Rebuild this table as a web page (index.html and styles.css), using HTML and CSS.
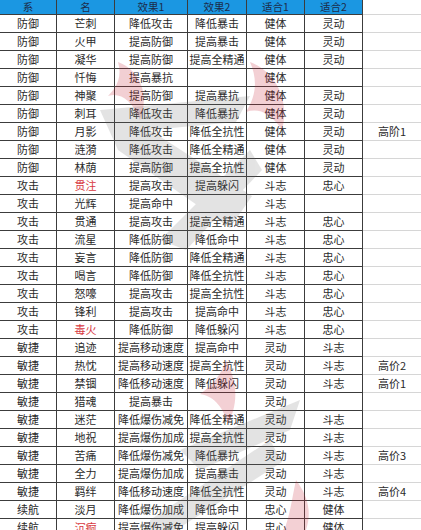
FILE: index.html
```html
<!DOCTYPE html>
<html lang="zh-CN">
<head>
<meta charset="utf-8">
<title>表</title>
<link rel="stylesheet" href="styles.css">
</head>
<body>
<div class="sheet">
  <div class="row head">
    <div class="c">系</div><div class="c">名</div><div class="c">效果1</div><div class="c">效果2</div><div class="c">适合1</div><div class="c">适合2</div><div class="c x"></div>
  </div>
  <div class="row"><div class="c">防御</div><div class="c">芒刺</div><div class="c">降低攻击</div><div class="c">降低暴击</div><div class="c">健体</div><div class="c">灵动</div><div class="c x"></div></div>
  <div class="row"><div class="c">防御</div><div class="c">火甲</div><div class="c">提高防御</div><div class="c">提高暴击</div><div class="c">健体</div><div class="c">灵动</div><div class="c x"></div></div>
  <div class="row"><div class="c">防御</div><div class="c">凝华</div><div class="c">提高防御</div><div class="c">提高全精通</div><div class="c">健体</div><div class="c">灵动</div><div class="c x"></div></div>
  <div class="row"><div class="c">防御</div><div class="c">忏悔</div><div class="c">提高暴抗</div><div class="c"></div><div class="c">健体</div><div class="c"></div><div class="c x"></div></div>
  <div class="row"><div class="c">防御</div><div class="c">神聚</div><div class="c">提高防御</div><div class="c">提高暴抗</div><div class="c">健体</div><div class="c">灵动</div><div class="c x"></div></div>
  <div class="row"><div class="c">防御</div><div class="c">刺耳</div><div class="c">降低攻击</div><div class="c">降低暴抗</div><div class="c">健体</div><div class="c">灵动</div><div class="c x"></div></div>
  <div class="row"><div class="c">防御</div><div class="c">月影</div><div class="c">降低攻击</div><div class="c">降低全抗性</div><div class="c">健体</div><div class="c">灵动</div><div class="c x">高阶1</div></div>
  <div class="row"><div class="c">防御</div><div class="c">涟漪</div><div class="c">降低攻击</div><div class="c">降低全精通</div><div class="c">健体</div><div class="c">灵动</div><div class="c x"></div></div>
  <div class="row"><div class="c">防御</div><div class="c">林荫</div><div class="c">提高防御</div><div class="c">提高全抗性</div><div class="c">健体</div><div class="c">灵动</div><div class="c x"></div></div>
  <div class="row"><div class="c">攻击</div><div class="c red">贯注</div><div class="c">提高攻击</div><div class="c">提高躲闪</div><div class="c">斗志</div><div class="c">忠心</div><div class="c x"></div></div>
  <div class="row"><div class="c">攻击</div><div class="c">光辉</div><div class="c">提高命中</div><div class="c"></div><div class="c">斗志</div><div class="c"></div><div class="c x"></div></div>
  <div class="row"><div class="c">攻击</div><div class="c">贯通</div><div class="c">提高攻击</div><div class="c">提高全精通</div><div class="c">斗志</div><div class="c">忠心</div><div class="c x"></div></div>
  <div class="row"><div class="c">攻击</div><div class="c">流星</div><div class="c">降低防御</div><div class="c">降低命中</div><div class="c">斗志</div><div class="c">忠心</div><div class="c x"></div></div>
  <div class="row"><div class="c">攻击</div><div class="c">妄言</div><div class="c">降低防御</div><div class="c">降低全精通</div><div class="c">斗志</div><div class="c">忠心</div><div class="c x"></div></div>
  <div class="row"><div class="c">攻击</div><div class="c">喝言</div><div class="c">降低防御</div><div class="c">降低全抗性</div><div class="c">斗志</div><div class="c">忠心</div><div class="c x"></div></div>
  <div class="row"><div class="c">攻击</div><div class="c">怒嚎</div><div class="c">提高攻击</div><div class="c">提高全抗性</div><div class="c">斗志</div><div class="c">忠心</div><div class="c x"></div></div>
  <div class="row"><div class="c">攻击</div><div class="c">锋利</div><div class="c">提高攻击</div><div class="c">提高命中</div><div class="c">斗志</div><div class="c">忠心</div><div class="c x"></div></div>
  <div class="row"><div class="c">攻击</div><div class="c red">毒火</div><div class="c">降低防御</div><div class="c">降低躲闪</div><div class="c">斗志</div><div class="c">忠心</div><div class="c x"></div></div>
  <div class="row"><div class="c">敏捷</div><div class="c">追迹</div><div class="c">提高移动速度</div><div class="c">提高命中</div><div class="c">灵动</div><div class="c">斗志</div><div class="c x"></div></div>
  <div class="row"><div class="c">敏捷</div><div class="c">热忱</div><div class="c">提高移动速度</div><div class="c">提高全抗性</div><div class="c">灵动</div><div class="c">斗志</div><div class="c x">高价2</div></div>
  <div class="row"><div class="c">敏捷</div><div class="c">禁锢</div><div class="c">降低移动速度</div><div class="c">降低躲闪</div><div class="c">灵动</div><div class="c">斗志</div><div class="c x">高价1</div></div>
  <div class="row"><div class="c">敏捷</div><div class="c">猎魂</div><div class="c">提高暴击</div><div class="c"></div><div class="c">灵动</div><div class="c"></div><div class="c x"></div></div>
  <div class="row"><div class="c">敏捷</div><div class="c">迷茫</div><div class="c">降低爆伤减免</div><div class="c">降低全精通</div><div class="c">灵动</div><div class="c">斗志</div><div class="c x"></div></div>
  <div class="row"><div class="c">敏捷</div><div class="c">地祝</div><div class="c">提高爆伤加成</div><div class="c">提高全抗性</div><div class="c">灵动</div><div class="c">斗志</div><div class="c x"></div></div>
  <div class="row"><div class="c">敏捷</div><div class="c">苦痛</div><div class="c">降低爆伤减免</div><div class="c">降低暴抗</div><div class="c">灵动</div><div class="c">斗志</div><div class="c x">高价3</div></div>
  <div class="row"><div class="c">敏捷</div><div class="c">全力</div><div class="c">提高爆伤加成</div><div class="c">提高暴击</div><div class="c">灵动</div><div class="c">斗志</div><div class="c x"></div></div>
  <div class="row"><div class="c">敏捷</div><div class="c">羁绊</div><div class="c">降低移动速度</div><div class="c">降低全抗性</div><div class="c">灵动</div><div class="c">斗志</div><div class="c x">高价4</div></div>
  <div class="row"><div class="c">续航</div><div class="c">淡月</div><div class="c">降低爆伤加成</div><div class="c">降低命中</div><div class="c">忠心</div><div class="c">健体</div><div class="c x"></div></div>
  <div class="row"><div class="c">续航</div><div class="c red">沉痾</div><div class="c">提高爆伤减免</div><div class="c">提高躲闪</div><div class="c">忠心</div><div class="c">健体</div><div class="c x"></div></div>

  <svg class="mark" width="421" height="530" viewBox="0 0 421 530" aria-hidden="true">
    <g fill="#c9283a" opacity="0.22">
      <path d="M118 62 C140 70 150 95 140 120 C132 100 120 92 108 96 C118 86 122 76 118 62 Z"/>
      <path d="M250 62 C276 72 290 100 282 130 C270 112 258 108 246 112 C256 96 258 80 250 62 Z"/>
      <path d="M226 360 C236 380 240 400 228 424 C222 404 212 396 200 394 C212 386 222 374 226 360 Z"/>
      <path d="M296 480 C308 496 312 512 306 530 L284 530 C290 516 292 498 296 480 Z"/>
    </g>
    <g fill="#6a6a6a" opacity="0.18">
      <path d="M100 110 L250 96 L236 122 L150 130 L252 196 L230 228 L118 150 Z"/>
      <path d="M160 240 L250 150 L262 170 L186 250 Z"/>
      <path d="M180 450 L300 400 L290 430 L200 470 Z"/>
      <path d="M150 520 L270 440 L282 462 L176 530 L150 530 Z"/>
    </g>
  </svg>
</div>
</body>
</html>
```

FILE: styles.css
```css
html, body {
  margin: 0;
  padding: 0;
  background: #ffffff;
}

body {
  font-family: "Noto Sans CJK SC", "Noto Sans", sans-serif;
  font-size: 11px;
  color: #2a2a2a;
  overflow: hidden;
}

.sheet {
  position: relative;
  width: 421px;
  height: 530px;
  overflow: hidden;
}

.row {
  display: grid;
  grid-template-columns: 57px 58px 73px 59px 58px 58px 58px;
  height: 18px;
}

.c {
  box-sizing: border-box;
  height: 100%;
  border-right: 1px solid #3c3c3c;
  border-bottom: 1px solid #3c3c3c;
  display: flex;
  align-items: center;
  justify-content: center;
  white-space: nowrap;
  line-height: 1;
}

.c.x {
  border-right: none;
  border-bottom: 1px solid #d6d6d6;
}

.head {
  height: 15px;
}

.head .c {
  background: #1b97e2;
  color: #1c2c4a;
  font-size: 10.5px;
}

.head .c.x {
  background: #ffffff;
}

.red {
  color: #d8383f;
}

.mark {
  position: absolute;
  left: 0;
  top: 0;
  pointer-events: none;
}
```
